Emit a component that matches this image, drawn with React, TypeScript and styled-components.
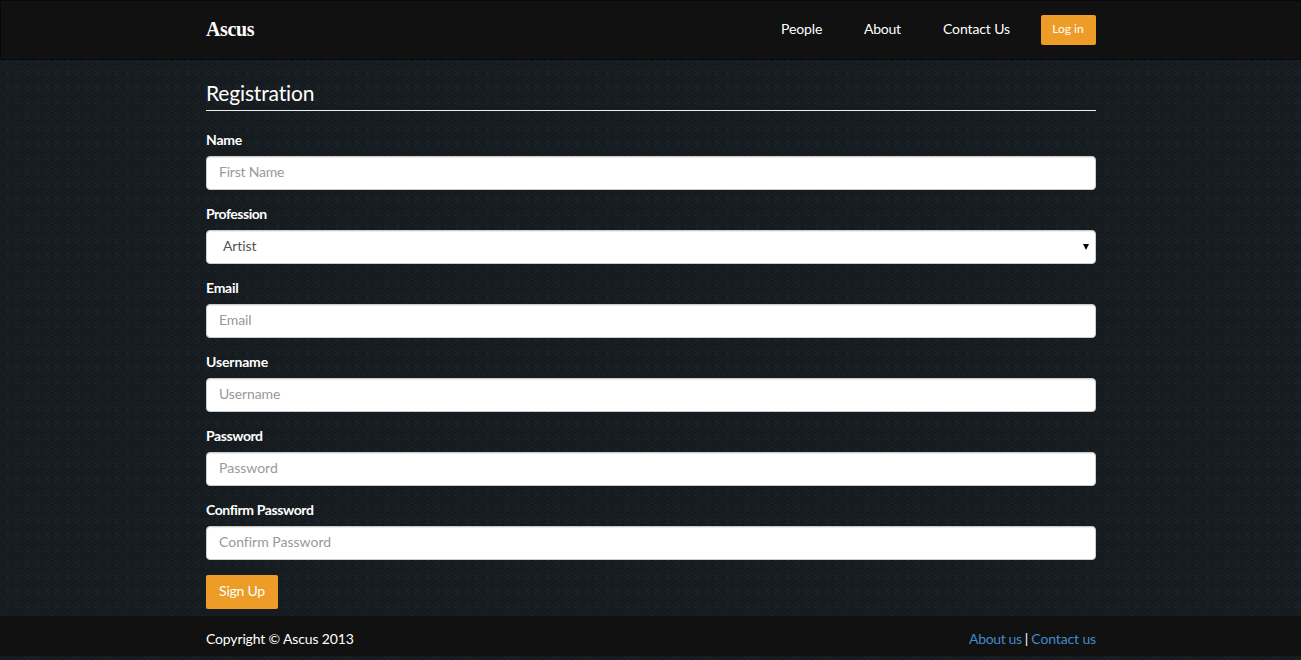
import React from "react";
import styled, { createGlobalStyle } from "styled-components";

const GlobalStyle = createGlobalStyle`
  * { box-sizing: border-box; }
  body {
    margin: 0;
    min-height: 660px;
    color: #fff;
    font: 14px/20px Lato, "Open Sans", sans-serif;
    font-variant-ligatures: none;
    background-color: #151a1e;
    background-image:
      conic-gradient(rgba(70, 100, 110, 0.1) 25%, transparent 0 50%, rgba(70, 100, 110, 0.1) 0 75%, transparent 0),
      conic-gradient(rgba(0, 0, 0, 0.16) 25%, transparent 0 50%, rgba(0, 0, 0, 0.1) 0 75%, transparent 0),
      conic-gradient(rgba(50, 80, 90, 0.07) 25%, transparent 0);
    background-size: 2px 2px, 6px 4px, 10px 14px;
  }
`;

const Container = styled.div`
  width: 890px;
  margin-left: 206px;
`;

const Navbar = styled.header`
  height: 60px;
  background: #111;
  border: 1px solid #080808;
`;

const NavInner = styled(Container)`
  height: 100%;
  margin-left: 205px;
  display: flex;
  align-items: center;
`;

const Tracked = styled.span<{ $track?: number }>`
  letter-spacing: ${(p) => p.$track ?? 0}px;
`;

const Brand = styled.a`
  margin-right: auto;
  padding-bottom: 3px;
  font: bold 20px/20px "Liberation Serif", serif;
`;

const NavLinks = styled.nav`
  display: flex;
  gap: 42px;
  margin-right: 31px;
  padding-bottom: 2px;
`;

const NavLink = styled.a<{ $width: number }>`
  width: ${(p) => p.$width}px;
  white-space: nowrap;
`;

const Button = styled.button<{ $small?: boolean }>`
  display: flex;
  align-items: center;
  justify-content: center;
  width: ${(p) => (p.$small ? 55 : 72)}px;
  height: ${(p) => (p.$small ? 30 : 34)}px;
  padding: 0 ${(p) => (p.$small ? "1px 3px 0" : "0 3px")};
  border: 0;
  border-radius: 2px;
  background: #ed9c28;
  color: #fff;
  font-family: inherit;
  font-size: ${(p) => (p.$small ? 12 : 14)}px;
  white-space: nowrap;
`;

const Title = styled.h1`
  height: 51px;
  margin: 0 0 19px;
  padding-top: 21px;
  border-bottom: 1px solid #eee;
  font-size: 21px;
  line-height: 24px;
  font-weight: 400;
`;

const Field = styled.div`
  height: 60px;
  margin-bottom: 14px;
`;

const Label = styled.label`
  display: block;
  height: 26px;
  font-weight: 700;
`;

const Control = styled.div<{ $select?: boolean }>`
  display: flex;
  align-items: center;
  justify-content: space-between;
  height: 34px;
  padding: ${(p) => (p.$select ? "0 6px 2px 16px" : "0 12px 2px")};
  border: 1px solid #ccc;
  border-radius: 4px;
  background: #fff;
  box-shadow: inset 0 1px 1px rgba(0, 0, 0, 0.075);
  color: ${(p) => (p.$select ? "#555" : "#999")};
`;

const Arrow = styled.svg`
  margin-top: 1px;
`;

const Actions = styled.div`
  padding-top: 1px;
`;

const Footer = styled.footer`
  height: 40px;
  margin-top: 7px;
  background: #111;
`;

const FooterInner = styled(Container)`
  display: flex;
  justify-content: space-between;
  padding-top: 13px;
`;

const FooterLinks = styled.div`
  display: flex;
  gap: 3px;
`;

const FooterLink = styled.a`
  color: #428bca;
`;

const fields = [
  { label: "Name", labelTrack: -0.2, value: "First Name", track: -0.2 },
  { label: "Profession", labelTrack: -0.48, value: "Artist", track: -0.1, select: true },
  { label: "Email", labelTrack: -0.25, value: "Email", track: -0.1 },
  { label: "Username", labelTrack: -0.14, value: "Username", track: -0.12 },
  { label: "Password", labelTrack: -0.42, value: "Password", track: 0 },
  { label: "Confirm Password", labelTrack: -0.4, value: "Confirm Password", track: 0 },
];

export default function App() {
  return (
    <>
      <GlobalStyle />
      <Navbar>
        <NavInner>
          <Brand><Tracked $track={-0.4}>Ascus</Tracked></Brand>
          <NavLinks>
            <NavLink $width={41}><Tracked $track={-0.1}>People</Tracked></NavLink>
            <NavLink $width={37}><Tracked $track={-0.25}>About</Tracked></NavLink>
            <NavLink $width={67}><Tracked $track={-0.12}>Contact Us</Tracked></NavLink>
          </NavLinks>
          <Button $small><Tracked>Log in</Tracked></Button>
        </NavInner>
      </Navbar>
      <Container as="main">
        <Title><Tracked $track={-0.15}>Registration</Tracked></Title>
        {fields.map((f) => (
          <Field key={f.label}>
            <Label><Tracked $track={f.labelTrack}>{f.label}</Tracked></Label>
            <Control $select={f.select}>
              <Tracked $track={f.track}>{f.value}</Tracked>
              {f.select && (
                <Arrow width="6" height="6" viewBox="0 0 6 6">
                  <path d="M0 0H6L3 6Z" fill="#000" />
                </Arrow>
              )}
            </Control>
          </Field>
        ))}
        <Actions>
          <Button><Tracked $track={-0.25}>Sign Up</Tracked></Button>
        </Actions>
      </Container>
      <Footer>
        <FooterInner>
          <Tracked $track={-0.15}>Copyright © Ascus 2013</Tracked>
          <FooterLinks>
            <FooterLink><Tracked $track={-0.35}>About us</Tracked></FooterLink>
            <span>|</span>
            <FooterLink><Tracked $track={-0.13}>Contact us</Tracked></FooterLink>
          </FooterLinks>
        </FooterInner>
      </Footer>
    </>
  );
}
